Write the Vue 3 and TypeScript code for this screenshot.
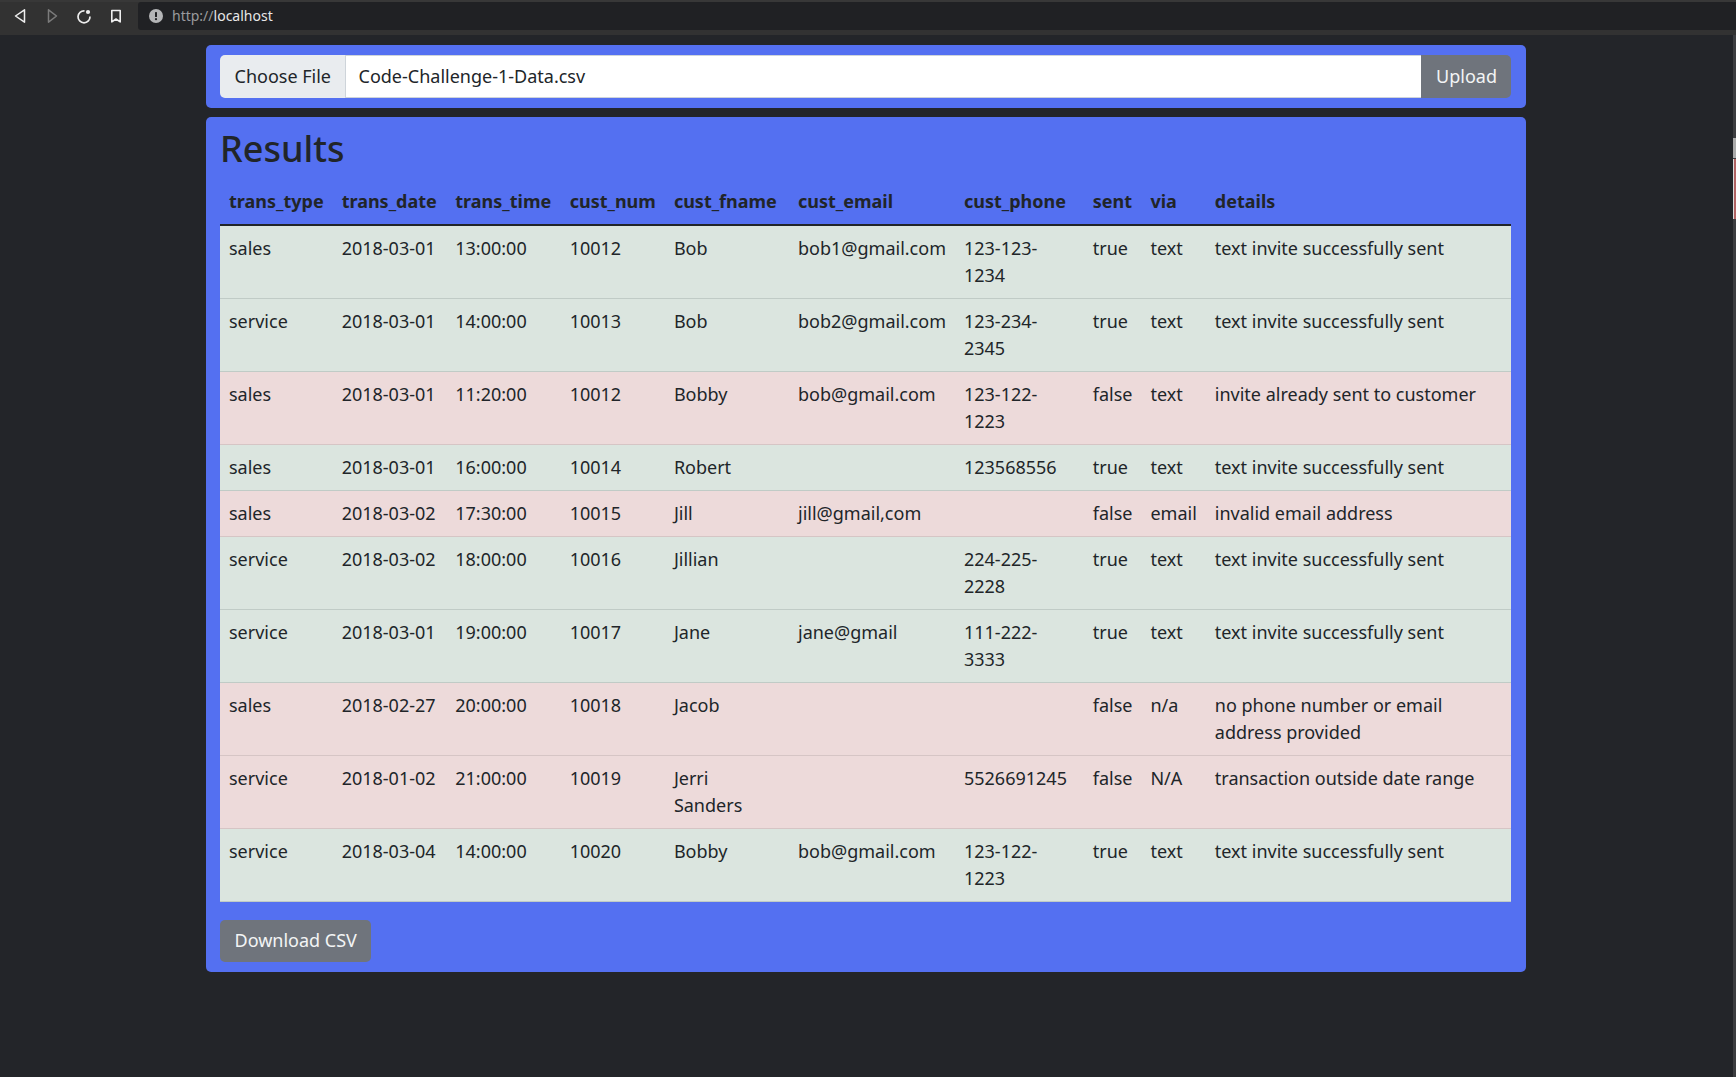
<script setup lang="ts">
interface Row {
  type: string; date: string; time: string; num: string; name: string;
  email: string; phone: string; sent: string; via: string; details: string;
}
const heads = ['trans_type','trans_date','trans_time','cust_num','cust_fname','cust_email','cust_phone','sent','via','details'];
const ok = 'text invite successfully sent';
const rows: Row[] = [
  { type:'sales', date:'2018-03-01', time:'13:00:00', num:'10012', name:'Bob', email:'bob1@gmail.com', phone:'123-123-1234', sent:'true', via:'text', details:ok },
  { type:'service', date:'2018-03-01', time:'14:00:00', num:'10013', name:'Bob', email:'bob2@gmail.com', phone:'123-234-2345', sent:'true', via:'text', details:ok },
  { type:'sales', date:'2018-03-01', time:'11:20:00', num:'10012', name:'Bobby', email:'bob@gmail.com', phone:'123-122-1223', sent:'false', via:'text', details:'invite already sent to customer' },
  { type:'sales', date:'2018-03-01', time:'16:00:00', num:'10014', name:'Robert', email:'', phone:'123568556', sent:'true', via:'text', details:ok },
  { type:'sales', date:'2018-03-02', time:'17:30:00', num:'10015', name:'Jill', email:'jill@gmail,com', phone:'', sent:'false', via:'email', details:'invalid email address' },
  { type:'service', date:'2018-03-02', time:'18:00:00', num:'10016', name:'Jillian', email:'', phone:'224-225-2228', sent:'true', via:'text', details:ok },
  { type:'service', date:'2018-03-01', time:'19:00:00', num:'10017', name:'Jane', email:'jane@gmail', phone:'111-222-3333', sent:'true', via:'text', details:ok },
  { type:'sales', date:'2018-02-27', time:'20:00:00', num:'10018', name:'Jacob', email:'', phone:'', sent:'false', via:'n/a', details:'no phone number or email address provided' },
  { type:'service', date:'2018-01-02', time:'21:00:00', num:'10019', name:'Jerri Sanders', email:'', phone:'5526691245', sent:'false', via:'N/A', details:'transaction outside date range' },
  { type:'service', date:'2018-03-04', time:'14:00:00', num:'10020', name:'Bobby', email:'bob@gmail.com', phone:'123-122-1223', sent:'true', via:'text', details:ok },
];
</script>

<template>
  <div class="page">
    <header class="toolbar">
      <div class="nav">
        <svg class="ico" viewBox="0 0 16 16"><path d="M12.500 1.800v12.400L3.500 8z" fill="none" stroke="#eee" stroke-width="1.500" stroke-linejoin="round"/></svg>
        <svg class="ico" viewBox="0 0 16 16"><path d="M4.500 1.800v12.400L12.500 8z" fill="none" stroke="#7b7b7b" stroke-width="1.500" stroke-linejoin="round"/></svg>
        <svg class="ico" viewBox="0 0 16 16"><path d="M14 8.500A6 6 0 1 1 8.500 2.800" fill="none" stroke="#eee" stroke-width="1.700"/><circle cx="12" cy="4" r="2.100" fill="#eee"/></svg>
        <svg class="ico" viewBox="0 0 16 16"><path d="M3.800 2.500h8.400v11.400L8 11l-4.200 2.900z" fill="none" stroke="#eee" stroke-width="1.600" stroke-linejoin="round"/></svg>
      </div>
      <div class="address">
        <svg class="info" viewBox="0 0 14 14"><circle cx="7" cy="7" r="7" fill="#b4b5b7"/><rect x="6" y="3" width="2" height="5" rx=".6" fill="#202124"/><circle cx="7" cy="10.200" r="1.100" fill="#202124"/></svg>
        <span class="url"><span class="scheme">http://</span>localhost</span>
      </div>
    </header>

    <main class="container">
      <section class="panel upload">
        <div class="group">
          <span class="choose">Choose File</span>
          <span class="filename">Code-Challenge-1-Data.csv</span>
          <button class="btn attached" type="button">Upload</button>
        </div>
      </section>

      <section class="panel results">
        <h2>Results</h2>
        <table>
          <thead>
            <tr><th v-for="h in heads" :key="h">{{ h }}</th></tr>
          </thead>
          <tbody>
            <tr v-for="(r, i) in rows" :key="i" :class="r.sent === 'true' ? 'good' : 'bad'">
              <td>{{ r.type }}</td>
              <td>{{ r.date }}</td>
              <td>{{ r.time }}</td>
              <td>{{ r.num }}</td>
              <td>{{ r.name }}</td>
              <td>{{ r.email }}</td>
              <td>{{ r.phone }}</td>
              <td>{{ r.sent }}</td>
              <td>{{ r.via }}</td>
              <td>{{ r.details }}</td>
            </tr>
          </tbody>
        </table>
        <button class="btn download" type="button">Download CSV</button>
      </section>
    </main>

    <div class="rail" aria-hidden="true">
      <span class="thumb"></span>
      <span class="mark"></span>
    </div>
  </div>
</template>

<style>
html, body { margin: 0; background: #232529; }
</style>

<style scoped>
.page {
  position: relative;
  min-height: 1077px;
  box-sizing: border-box;
  background: #232529;
  color: #212529;
  font-family: "Noto Sans", sans-serif;
  font-size: 18px;
  line-height: 1.5;
  overflow: hidden;
}
.toolbar {
  display: flex;
  align-items: center;
  height: 35px;
  padding-bottom: 5px;
  box-sizing: border-box;
  background: #323232;
  border-top: 2px solid #383838;
}
.nav { display: flex; width: 138px; padding-left: 12px; gap: 16px; box-sizing: border-box; }
.ico { width: 16px; height: 16px; display: block; }
.address {
  flex: 1;
  height: 28px;
  display: flex;
  align-items: center;
  gap: 9px;
  padding-left: 11px;
  background: #202124;
  border-radius: 3px 0 0 3px;
}
.info { width: 14px; height: 14px; }
.url { font-size: 14px; color: #e8e8e8; margin-bottom: 2px; }
.scheme { color: #9a9b9d; }

.container { width: 1320px; margin: 10px 0 0 206px; display: flex; flex-direction: column; gap: 9.500px; }
.panel { background: #5470f1; border-radius: 5px; padding: 0 15px 0 14px; }
.upload { padding-top: 10px; padding-bottom: 10px; }
.group { display: flex; height: 42.500px; border-radius: 5px; overflow: hidden; }
.choose {
  display: flex; align-items: center; padding: 0 13.500px 0 14.500px; background: #e9ecef;
  border-right: 1px solid #ced4da;
}
.filename {
  flex: 1; display: flex; align-items: center; padding: 0 13px; background: #fff;
  border-top: 1px solid #ced4da; border-bottom: 1px solid #ced4da; box-sizing: border-box;
}
.btn {
  font: inherit; color: #f3f4f5; background: #6f747c; border: 0; border-radius: 5px;
  padding: 0 14.500px; height: 42.500px;
}
.attached { border-radius: 0; padding: 0 14px 0 15px; }
.results { padding-top: 10px; padding-bottom: 9.500px; }
h2 { margin: 0 0 8.500px; font-size: 36px; font-weight: 500; line-height: 1.2; }
table { width: 100%; border-collapse: collapse; margin-bottom: 18px; }
th { text-align: left; font-weight: 700; padding: 9px; border-bottom: 2px solid #212529; }
td { padding: 9px; vertical-align: top; border-bottom: 1px solid #c0cbc6; color: #212529; }
th:nth-child(2), td:nth-child(2), th:nth-child(3), td:nth-child(3) { padding-right: 9.500px; }
.good td { background: #dbe5df; }
.bad td { background: #eddada; border-bottom-color: #d6c5c5; }
.download { display: block; }

.rail {
  position: absolute; top: 35px; right: 0; bottom: 0; width: 3px; background: #3c3d40;
}
.thumb { position: absolute; top: 103px; left: 0; right: 0; height: 20px; background: #aaa; }
.mark { position: absolute; top: 124px; left: 0; right: 0; height: 60px; background: #b26464; border-left: 1px solid #ddd; }
</style>
